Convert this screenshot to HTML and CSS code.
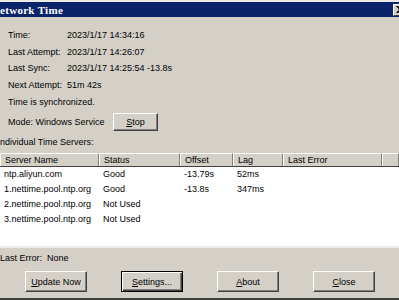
FILE: index.html
```html
<!DOCTYPE html>
<html lang="en">
  <head>
    <meta charset="UTF-8" />
    <title>Network Time</title>
    <link rel="stylesheet" href="styles.css">
  </head>
  <body>
    <div class="window">
      <div class="topline"></div>
      <div class="titlebar">
        <span class="title">etwork Time</span>
        <span class="xbtn">
          <svg width="8" height="7" viewBox="0 0 8 7">
            <path d="M0 0h2l2 2 2-2h2L5 3.5 8 7H6L4 5 2 7H0l3-3.5z" fill="#000" />
          </svg>
        </span>
      </div>

      <div class="info">
        <div class="label">Time:</div><div>2023/1/17 14:34:16</div>
        <div class="label">Last Attempt:</div><div>2023/1/17 14:26:07</div>
        <div class="label">Last Sync:</div><div>2023/1/17 14:25:54 -13.8s</div>
        <div class="label">Next Attempt:</div><div>51m 42s</div>
      </div>
      <div class="status">Time is synchronized.</div>
      <div class="mode">
        <span>Mode: Windows Service</span>
        <button class="btn small"><u>S</u>top</button>
      </div>

      <div class="servers-label">ndividual Time Servers:</div>
      <div class="list">
        <div class="row head">
          <div>Server Name</div>
          <div>Status</div>
          <div>Offset</div>
          <div>Lag</div>
          <div>Last Error</div>
          <div></div>
        </div>
        <div class="rows">
          <div class="row">
            <div>ntp.aliyun.com</div><div>Good</div><div>-13.79s</div><div>52ms</div><div></div><div></div>
          </div>
          <div class="row">
            <div>1.nettime.pool.ntp.org</div><div>Good</div><div>-13.8s</div><div>347ms</div><div></div><div></div>
          </div>
          <div class="row">
            <div>2.nettime.pool.ntp.org</div><div>Not Used</div><div></div><div></div><div></div><div></div>
          </div>
          <div class="row">
            <div>3.nettime.pool.ntp.org</div><div>Not Used</div><div></div><div></div><div></div><div></div>
          </div>
        </div>
      </div>

      <div class="last-error">Last Error:&nbsp; None</div>
      <div class="buttons">
        <button class="btn"><u>U</u>pdate Now</button>
        <button class="btn default"><u>S</u>ettings...</button>
        <button class="btn"><u>A</u>bout</button>
        <button class="btn"><u>C</u>lose</button>
      </div>
      <div class="bottomline"></div>
    </div>
  </body>
</html>
```

FILE: styles.css
```css
* {
  margin: 0;
  padding: 0;
  box-sizing: border-box;
}

body {
  background: #d4d0c8;
  font-family: "Liberation Sans", Arial, sans-serif;
  font-size: 9px;
  color: #000;
}

.window {
  width: 399px;
  height: 300px;
  overflow: hidden;
  display: flex;
  flex-direction: column;
}

.topline {
  height: 2px;
  background: #ecebe8;
}

.titlebar {
  height: 15px;
  background: #0a246a;
  color: #fff;
  display: flex;
  align-items: center;
  justify-content: space-between;
  overflow: hidden;
}

.title {
  font-family: "Liberation Serif", serif;
  font-weight: bold;
  font-size: 11px;
  letter-spacing: 0.3px;
}

.xbtn {
  width: 16px;
  height: 12px;
  margin-right: -10px;
  background: #d4d0c8;
  display: flex;
  align-items: center;
  padding-left: 2px;
  border-top: 1px solid #fff;
  border-left: 1px solid #fff;
  border-bottom: 1px solid #404040;
}

.info {
  display: grid;
  grid-template-columns: 59px auto;
  line-height: 16.5px;
  padding: 10px 0 0 8px;
}

.status {
  line-height: 17px;
  padding-left: 8px;
  margin-top: 1px;
}

.mode {
  display: flex;
  align-items: center;
  height: 19px;
  padding-left: 8px;
  margin-top: 1px;
}

.mode span {
  width: 105px;
}

.servers-label {
  line-height: 17px;
  margin-top: 3px;
}

.list {
  margin-top: 2px;
  background: #fff;
  border-bottom: 2px solid #ecebe8;
}

.row {
  display: grid;
  grid-template-columns: 99px 81px 53px 50px 99px 1fr;
  height: 15px;
  line-height: 15px;
}

.row div {
  padding-left: 4px;
  white-space: nowrap;
  overflow: hidden;
}

.head {
  height: 14px;
  line-height: 12px;
  background: #d4d0c8;
  border-bottom: 1px solid #404040;
}

.head div {
  border-left: 1px solid #fff;
  border-right: 1px solid #808080;
  border-top: 1px solid #fff;
}

.rows {
  height: 79px;
}

.last-error {
  line-height: 17px;
  margin-top: 2px;
}

.buttons {
  display: flex;
  gap: 34px;
  padding-left: 25px;
  margin-top: 4px;
}

.btn {
  width: 62px;
  height: 21px;
  background: #d4d0c8;
  font-family: "Liberation Sans", Arial, sans-serif;
  font-size: 9px;
  color: #000;
  border-top: 1px solid #fff;
  border-left: 1px solid #fff;
  border-right: 1px solid #404040;
  border-bottom: 1px solid #404040;
  box-shadow: inset -1px -1px 0 #808080;
}

.btn.small {
  width: 45px;
  height: 18px;
}

.btn.default {
  border: 1px solid #000;
  box-shadow: inset 1px 1px 0 #fff, inset -1px -1px 0 #404040, inset -2px -2px 0 #808080;
}

.bottomline {
  margin-top: auto;
  height: 2px;
  background: #404040;
}
```
